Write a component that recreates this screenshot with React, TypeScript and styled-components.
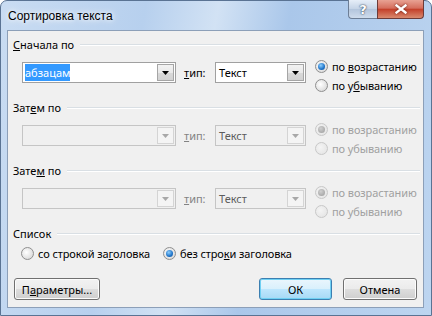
import React from "react";
import styled, { createGlobalStyle, css } from "styled-components";

const GlobalStyle = createGlobalStyle`
  *, *::before, *::after {
    box-sizing: border-box;
  }
  html, body {
    margin: 0;
    padding: 0;
    background: #fff;
  }
  body {
    font-family: "Noto Sans", "Open Sans", sans-serif;
    font-size: 11px;
    line-height: 15px;
  }
`;

type SortRow = {
  label: React.ReactNode;
  field: string;
  enabled: boolean;
  selected?: boolean;
};

const rows: SortRow[] = [
  { label: <><u>С</u>начала по</>, field: "абзацам", enabled: true, selected: true },
  { label: <>Зат<u>е</u>м по</>, field: "", enabled: false },
  { label: <>Зате<u>м</u> по</>, field: "", enabled: false },
];

function Arrow({ disabled }: { disabled?: boolean }) {
  return (
    <svg width="7" height="4" viewBox="0 0 7 4">
      <path d="M0 0h7L3.5 4z" fill={disabled ? "#a8a8a8" : "#000"} />
    </svg>
  );
}

function Radio({ checked, disabled }: { checked?: boolean; disabled?: boolean }) {
  return (
    <RadioCircle $disabled={disabled}>
      {checked && <RadioDot $disabled={disabled} />}
    </RadioCircle>
  );
}

function App() {
  return (
    <>
      <GlobalStyle />
      <Window>
        <TitleBar>
          <Title>Сортировка текста</Title>
          <CaptionButtons>
            <HelpButton>?</HelpButton>
            <CloseButton>
              <svg width="12" height="10" viewBox="0 0 12 10">
                <path d="M1.5 1.5l9 7M10.5 1.5l-9 7" stroke="#fff" strokeWidth="2.4" strokeLinecap="square" />
              </svg>
            </CloseButton>
          </CaptionButtons>
        </TitleBar>
        <Client>
          {rows.map((row, i) => (
            <Section key={i}>
              <GroupHeader>
                <span>{row.label}</span>
                <Rule />
              </GroupHeader>
              <SortLine>
                <Combo $width={154} $disabled={!row.enabled}>
                  <ComboText>{row.selected ? <Selected>{row.field}</Selected> : row.field}</ComboText>
                  <DropButton $disabled={!row.enabled}>
                    <Arrow disabled={!row.enabled} />
                  </DropButton>
                </Combo>
                <TypeLabel $disabled={!row.enabled}>
                  <u>т</u>ип:
                </TypeLabel>
                <Combo $width={91} $disabled={!row.enabled}>
                  <ComboText $disabled={!row.enabled}>Текст</ComboText>
                  <DropButton $disabled={!row.enabled}>
                    <Arrow disabled={!row.enabled} />
                  </DropButton>
                </Combo>
                <RadioStack>
                  <RadioOption $disabled={!row.enabled}>
                    <Radio checked disabled={!row.enabled} />
                    <span>по {row.enabled ? <u>в</u> : "в"}озрастанию</span>
                  </RadioOption>
                  <RadioOption $disabled={!row.enabled}>
                    <Radio disabled={!row.enabled} />
                    <span>по у{row.enabled ? <u>б</u> : "б"}ыванию</span>
                  </RadioOption>
                </RadioStack>
              </SortLine>
            </Section>
          ))}
          <Section>
            <GroupHeader>
              <span>Список</span>
              <Rule />
            </GroupHeader>
            <ListLine>
              <RadioOption>
                <Radio />
                <span>со строкой за<u>г</u>оловка</span>
              </RadioOption>
              <RadioOption>
                <Radio checked />
                <span>без стро<u>к</u>и заголовка</span>
              </RadioOption>
            </ListLine>
          </Section>
          <ButtonRow>
            <PushButton $width={86}>
              П<u>а</u>раметры...
            </PushButton>
            <Spacer />
            <PushButton $width={73} $default>
              ОК
            </PushButton>
            <PushButton $width={74}>Отмена</PushButton>
          </ButtonRow>
        </Client>
      </Window>
    </>
  );
}

export default App;

const Window = styled.div`
  width: 432px;
  height: 316px;
  display: flex;
  flex-direction: column;
  padding: 0 7px 7px 6px;
  border: 1px solid #5a7393;
  border-radius: 7px 7px 0 0;
  background: linear-gradient(100deg, #c9dcf2 0%, #b7d0ee 30%, #d2e2f4 45%, #aac7ea 60%, #bdd5f0 100%);
  color: #000;
`;

const TitleBar = styled.div`
  height: 29px;
  flex-shrink: 0;
  display: flex;
  align-items: flex-start;
  justify-content: space-between;
`;

const Title = styled.div`
  padding: 8px 0 0 1px;
  font-family: "Liberation Sans", "Noto Sans", sans-serif;
  font-size: 12px;
  color: #000;
  text-shadow: 0 0 8px #fff, 0 0 4px #fff;
`;

const CaptionButtons = styled.div`
  display: flex;
  margin-top: -1px;
`;

const captionBase = css`
  height: 19px;
  display: flex;
  align-items: center;
  justify-content: center;
  border: 1px solid #6d7e95;
  border-top: none;
`;

const HelpButton = styled.div`
  ${captionBase};
  width: 29px;
  border-right: none;
  border-radius: 0 0 0 4px;
  background: linear-gradient(#e6eef8, #c4d3e6 50%, #b3c5dc 51%, #cfdcec);
  font-family: "DejaVu Sans", sans-serif;
  font-size: 13px;
  font-weight: bold;
  color: #fff;
  text-shadow: 0 0 1px #34475e, 0 0 2px #34475e;
`;

const CloseButton = styled.div`
  ${captionBase};
  width: 47px;
  border-radius: 0 0 4px 0;
  border-color: #6d3b38;
  background: linear-gradient(#e8a293, #d56e5d 45%, #c4412b 52%, #d98a6f);
  svg {
    filter: drop-shadow(0 0 1px #6a1e12);
  }
`;

const Client = styled.div`
  flex: 1;
  display: flex;
  flex-direction: column;
  background: #f0f0f0;
  border: 1px solid #8c9fb8;
  padding: 5px 6px 0 5px;
`;

const Section = styled.div`
  display: flex;
  flex-direction: column;
`;

const GroupHeader = styled.div`
  height: 16px;
  display: flex;
  align-items: center;
  gap: 6px;
  margin-right: -3px;
  span {
    white-space: nowrap;
  }
`;

const Rule = styled.div`
  flex: 1;
  height: 1px;
  background: #d9dfe4;
  box-shadow: 0 1px 0 #fff;
`;

const SortLine = styled.div`
  display: flex;
  align-items: flex-start;
  padding: 10px 0 0 9px;
  height: 47px;
`;

const Combo = styled.div<{ $width: number; $disabled?: boolean }>`
  width: ${(p) => p.$width}px;
  height: 21px;
  flex-shrink: 0;
  display: flex;
  align-items: stretch;
  padding: 1px;
  border: 1px solid ${(p) => (p.$disabled ? "#c5c5c5" : "#a0a0a0")};
  background: ${(p) => (p.$disabled ? "#f0f0f0" : "#fff")};
`;

const ComboText = styled.div<{ $disabled?: boolean }>`
  flex: 1;
  display: flex;
  align-items: center;
  padding-left: 2px;
  color: ${(p) => (p.$disabled ? "#5c5c5c" : "#000")};
`;

const Selected = styled.span`
  background: #3399ff;
  color: #fff;
  padding: 1px 0;
  margin-left: -1px;
`;

const DropButton = styled.div<{ $disabled?: boolean }>`
  width: 17px;
  display: flex;
  align-items: center;
  justify-content: center;
  border: 1px solid ${(p) => (p.$disabled ? "#d4d4d4" : "#a5a5a5")};
  background: ${(p) =>
    p.$disabled ? "#f4f4f4" : "linear-gradient(#f2f2f2, #e9e9e9 50%, #d9d9d9 51%, #d2d2d2)"};
`;

const TypeLabel = styled.div<{ $disabled?: boolean }>`
  width: 39px;
  flex-shrink: 0;
  padding: 3px 0 0 8px;
  color: ${(p) => (p.$disabled ? "#838383" : "#000")};
`;

const RadioStack = styled.div`
  display: flex;
  flex-direction: column;
  gap: 2px;
  margin-left: 9px;
  margin-top: -4px;
`;

const RadioOption = styled.div<{ $disabled?: boolean }>`
  display: flex;
  align-items: center;
  gap: 4px;
  height: 17px;
  white-space: nowrap;
  letter-spacing: -0.1px;
  color: ${(p) => (p.$disabled ? "#a0a0a0" : "#000")};
`;

const RadioCircle = styled.div<{ $disabled?: boolean }>`
  width: 13px;
  height: 13px;
  flex-shrink: 0;
  border-radius: 50%;
  display: flex;
  align-items: center;
  justify-content: center;
  border: 1px solid ${(p) => (p.$disabled ? "#c8c8c8" : "#8f8f8f")};
  background: ${(p) =>
    p.$disabled
      ? "radial-gradient(circle at 40% 40%, #f4f4f4, #e2e2e2)"
      : "radial-gradient(circle at 40% 40%, #ffffff, #e3e3e3 60%, #cfcfcf)"};
`;

const RadioDot = styled.div<{ $disabled?: boolean }>`
  width: 7px;
  height: 7px;
  border-radius: 50%;
  background: ${(p) =>
    p.$disabled
      ? "radial-gradient(circle at 40% 35%, #d0d0d0, #9a9a9a)"
      : "radial-gradient(circle at 40% 35%, #8fd0ff, #1e73c8 60%, #0e4c8e)"};
`;

const ListLine = styled.div`
  display: flex;
  gap: 13px;
  padding: 4px 0 0 8px;
  height: 37px;
`;

const ButtonRow = styled.div`
  display: flex;
  align-items: center;
  gap: 11px;
  padding-left: 1px;
`;

const Spacer = styled.div`
  flex: 1;
`;

const PushButton = styled.div<{ $width: number; $default?: boolean }>`
  width: ${(p) => p.$width}px;
  height: 22px;
  display: flex;
  align-items: center;
  justify-content: center;
  border-radius: 3px;
  border: 1px solid ${(p) => (p.$default ? "#3c7fb1" : "#707070")};
  background: ${(p) =>
    p.$default
      ? "linear-gradient(#eaf6fd, #d9f0fc 50%, #bee6fd 51%, #a7d9f5)"
      : "linear-gradient(#f2f2f2, #ebebeb 50%, #dddddd 51%, #cfcfcf)"};
  box-shadow: inset 0 0 0 1px ${(p) => (p.$default ? "#6fd0f3" : "#fcfcfc")};
`;
